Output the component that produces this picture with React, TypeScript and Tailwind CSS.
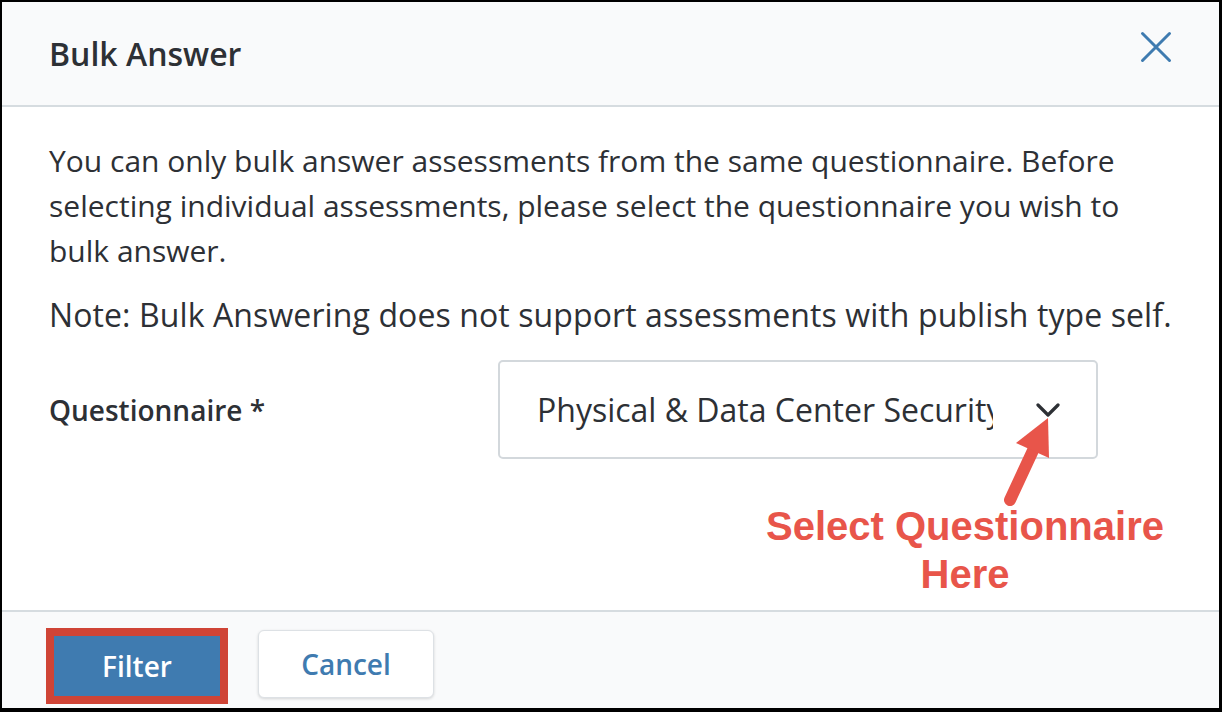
export default function App() {
  return (
    <div
      className="relative flex h-[712px] w-[1222px] flex-col overflow-hidden border-t-2 border-l-2 border-r-[3px] border-b-4 border-black bg-white text-[#2d3035]"
      style={{ fontFamily: '"Open Sans", sans-serif' }}
    >
      {/* Header */}
      <div className="flex h-[105px] shrink-0 items-center justify-between border-b-2 border-[#d6dce0] bg-[#f9fafb] pl-[47px] pr-[47px]">
        <h2 className="text-[32px] font-semibold">Bulk Answer</h2>
        <button type="button" className="mb-[13px] text-[#3f7bb0]">
          <svg width="32" height="32" viewBox="0 0 32 32" fill="none" stroke="currentColor" strokeWidth="3" strokeLinecap="round">
            <path d="M2.5 2.5L29.5 29.5M29.5 2.5L2.5 29.5" />
          </svg>
        </button>
      </div>

      {/* Body */}
      <div className="flex-1 px-[47px] pt-[31px]">
        <p className="text-[30px] leading-[45px]">
          You can only bulk answer assessments from the same questionnaire. Before selecting individual assessments, please select the questionnaire you wish to bulk answer.
        </p>
        <p className="mt-[19px] text-[32px] leading-[45px] tracking-[0.1px]">
          Note: Bulk Answering does not support assessments with publish type self.
        </p>
        <div className="mt-[23px] flex items-center">
          <label className="w-[449px] text-[28px] font-semibold">Questionnaire *</label>
          <div className="flex h-[99px] w-[600px] items-center justify-between rounded-[5px] border-2 border-[#d3d8dc] pl-[37px] pr-[36px]">
            <span className="w-[456px] overflow-hidden whitespace-nowrap text-[32px]">
              Physical &amp; Data Center Security
            </span>
            <svg width="24" height="14" viewBox="0 0 24 14" fill="none" stroke="#2d3035" strokeWidth="3.2" strokeLinecap="round" strokeLinejoin="round">
              <path d="M2 2L12 12L22 2" />
            </svg>
          </div>
        </div>
      </div>

      {/* Footer */}
      <div className="flex h-[98px] shrink-0 items-start gap-[30px] border-t-2 border-[#d6dce0] bg-[#f9fafb] pl-[44px] pt-[16px]">
        <div className="border-[8px] border-[#cf4436]">
          <button type="button" className="flex h-[60px] w-[166px] items-center justify-center bg-[#3f7bb0] text-[28px] font-semibold text-white">
            Filter
          </button>
        </div>
        <button
          type="button"
          className="mt-[2px] flex h-[68px] w-[176px] items-center justify-center rounded-[6px] border border-[#dde1e5] bg-white text-[28px] font-semibold text-[#3f7bb0] shadow-[0_1px_3px_rgba(0,0,0,0.15)]"
        >
          Cancel
        </button>
      </div>

      {/* Annotation */}
      <svg className="absolute left-[993px] top-[410px]" width="70" height="100" viewBox="995 412 70 100">
        <path d="M1010 500L1036 444" stroke="#e8554a" strokeWidth="12" strokeLinecap="round" />
        <path d="M1048 418L1016 443L1049 458Z" fill="#e8554a" />
      </svg>
      <div
        className="absolute left-[738px] top-[500px] w-[450px] text-center text-[40px] font-bold leading-[48px] text-[#e8554a]"
        style={{ fontFamily: '"Liberation Sans", Arial, sans-serif' }}
      >
        Select Questionnaire
        <br />
        Here
      </div>
    </div>
  );
}
